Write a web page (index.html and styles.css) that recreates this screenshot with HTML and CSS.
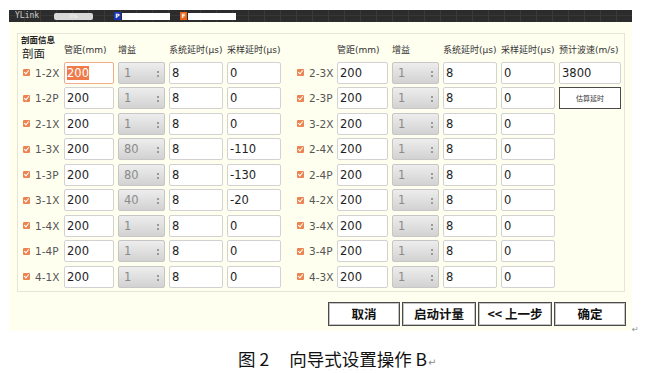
FILE: index.html
```html
<!DOCTYPE html>
<html>
<head>
  <meta charset="UTF-8"/>
  <title>剖面信息 - 向导式设置</title>
  <link rel="stylesheet" href="styles.css">
</head>
<body>
<div class="doc">
  <div class="line">
    <div class="shot">
      <div class="topbar">
        <span class="brand">YLink</span>
        <span class="prog">0%</span>
        <span class="tag tag-p">P</span><span class="slot"></span>
        <span class="tag tag-f">F</span><span class="slot"></span>
      </div>
      <div class="panel">
        <div class="group">
          <div class="gtitle">剖面信息</div>
          <div class="grid">
            <div class="hd hd-big">剖面</div>
            <div class="hd">管距(mm)</div>
            <div class="hd">增益</div>
            <div class="hd">系统延时(μs)</div>
            <div class="hd">采样延时(μs)</div>
            <div class="hd"></div>
            <div class="hd">管距(mm)</div>
            <div class="hd">增益</div>
            <div class="hd">系统延时(μs)</div>
            <div class="hd">采样延时(μs)</div>
            <div class="hd">预计波速(m/s)</div>

            <div class="lab"><i class="cb"></i>1-2X</div>
            <div class="inp focus"><span class="sel">200</span></div>
            <div class="combo">1</div>
            <div class="inp">8</div>
            <div class="inp">0</div>
            <div class="lab lab-r"><i class="cb"></i>2-3X</div>
            <div class="inp">200</div>
            <div class="combo">1</div>
            <div class="inp">8</div>
            <div class="inp">0</div>
            <div class="inp">3800</div>

            <div class="lab"><i class="cb"></i>1-2P</div>
            <div class="inp">200</div>
            <div class="combo">1</div>
            <div class="inp">8</div>
            <div class="inp">0</div>
            <div class="lab lab-r"><i class="cb"></i>2-3P</div>
            <div class="inp">200</div>
            <div class="combo">1</div>
            <div class="inp">8</div>
            <div class="inp">0</div>
            <div class="calc">估算延时</div>

            <div class="lab"><i class="cb"></i>2-1X</div>
            <div class="inp">200</div>
            <div class="combo">1</div>
            <div class="inp">8</div>
            <div class="inp">0</div>
            <div class="lab lab-r"><i class="cb"></i>3-2X</div>
            <div class="inp">200</div>
            <div class="combo">1</div>
            <div class="inp">8</div>
            <div class="inp">0</div>
            <div></div>

            <div class="lab"><i class="cb"></i>1-3X</div>
            <div class="inp">200</div>
            <div class="combo">80</div>
            <div class="inp">8</div>
            <div class="inp">-110</div>
            <div class="lab lab-r"><i class="cb"></i>2-4X</div>
            <div class="inp">200</div>
            <div class="combo">1</div>
            <div class="inp">8</div>
            <div class="inp">0</div>
            <div></div>

            <div class="lab"><i class="cb"></i>1-3P</div>
            <div class="inp">200</div>
            <div class="combo">80</div>
            <div class="inp">8</div>
            <div class="inp">-130</div>
            <div class="lab lab-r"><i class="cb"></i>2-4P</div>
            <div class="inp">200</div>
            <div class="combo">1</div>
            <div class="inp">8</div>
            <div class="inp">0</div>
            <div></div>

            <div class="lab"><i class="cb"></i>3-1X</div>
            <div class="inp">200</div>
            <div class="combo">40</div>
            <div class="inp">8</div>
            <div class="inp">-20</div>
            <div class="lab lab-r"><i class="cb"></i>4-2X</div>
            <div class="inp">200</div>
            <div class="combo">1</div>
            <div class="inp">8</div>
            <div class="inp">0</div>
            <div></div>

            <div class="lab"><i class="cb"></i>1-4X</div>
            <div class="inp">200</div>
            <div class="combo">1</div>
            <div class="inp">8</div>
            <div class="inp">0</div>
            <div class="lab lab-r"><i class="cb"></i>3-4X</div>
            <div class="inp">200</div>
            <div class="combo">1</div>
            <div class="inp">8</div>
            <div class="inp">0</div>
            <div></div>

            <div class="lab"><i class="cb"></i>1-4P</div>
            <div class="inp">200</div>
            <div class="combo">1</div>
            <div class="inp">8</div>
            <div class="inp">0</div>
            <div class="lab lab-r"><i class="cb"></i>3-4P</div>
            <div class="inp">200</div>
            <div class="combo">1</div>
            <div class="inp">8</div>
            <div class="inp">0</div>
            <div></div>

            <div class="lab"><i class="cb"></i>4-1X</div>
            <div class="inp">200</div>
            <div class="combo">1</div>
            <div class="inp">8</div>
            <div class="inp">0</div>
            <div class="lab lab-r"><i class="cb"></i>4-3X</div>
            <div class="inp">200</div>
            <div class="combo">1</div>
            <div class="inp">8</div>
            <div class="inp">0</div>
            <div></div>
          </div>
        </div>
        <div class="btns">
          <div class="btn btn-a">取消</div>
          <div class="btn btn-b">启动计量</div>
          <div class="btn btn-b">&lt;&lt; 上一步</div>
          <div class="btn btn-a">确定</div>
        </div>
      </div>
    </div>
    <span class="pmark">↵</span>
  </div>
  <div class="caption">图 2<span class="sp"></span>向导<span class="wavy">式设置</span>操作 B<span class="pmark pmark-c">↵</span></div>
</div>
</body>
</html>
```

FILE: styles.css
```css
html, body{
  margin: 0;
  background: #fff;
}
.doc{
  padding: 10px 0 0 9px;
  width: 647px;
  box-sizing: border-box;
}
.line{
  display: flex;
  align-items: flex-end;
}
.shot{
  width: 623px;
  font-family: "DejaVu Sans", "Noto Sans CJK SC", sans-serif;
}

/* top status bar */
.topbar{
  height: 12px;
  background-color: #2c2c2c;
  background-image:
    repeating-linear-gradient(90deg, transparent 0 15px, #3a3a3a 15px 16px),
    linear-gradient(180deg, transparent 0 5px, #363636 5px 6px, transparent 6px);
  display: flex;
  align-items: center;
  padding-left: 6px;
}
.brand{
  font-family: "DejaVu Sans Mono", monospace;
  font-size: 8px;
  color: #cfcfcf;
  width: 39px;
  line-height: 12px;
}
.prog{
  width: 39px;
  height: 7px;
  background: #d8d8d8;
  border-radius: 2px;
  font-size: 5px;
  line-height: 7px;
  color: #f4f4f4;
  text-align: center;
  margin-right: 21px;
}
.tag{
  width: 7px;
  height: 8px;
  color: #fff;
  font-size: 6px;
  font-weight: bold;
  line-height: 8px;
  text-align: center;
  margin-right: 1px;
}
.tag-p{background: #1a36b8;}
.tag-f{background: #f0641a;}
.slot{
  width: 48px;
  height: 7px;
  background: #fff;
  margin-right: 10px;
}

/* cream panel */
.panel{
  background: #fffff0;
  height: 309px;
  padding: 11px 0 0 8px;
  box-sizing: border-box;
}
.group{
  width: 608px;
  height: 259px;
  border: 1px solid #e6e6d6;
  box-sizing: border-box;
  padding: 1px 0 0 4px;
}
.gtitle{
  font-family: "Noto Sans CJK SC", sans-serif;
  font-size: 8.5px;
  font-weight: bold;
  line-height: 9px;
  height: 11px;
  color: #222;
  margin-left: -1px;
}
.grid{
  display: grid;
  grid-template-columns: 38px 50px 47px 54px 54px 48px 51px 47px 54px 54px 62px;
  grid-template-rows: 12px repeat(9, 22px);
  column-gap: 4px;
  row-gap: 3.5px;
}
.hd{
  font-family: "DejaVu Sans", "Noto Sans CJK SC", sans-serif;
  font-size: 9px;
  color: #333;
  line-height: 10px;
  white-space: nowrap;
  align-self: end;
  margin-bottom: 3px;
}
.hd-big{
  font-family: "Noto Sans CJK SC", sans-serif;
  font-size: 11.5px;
  line-height: 11.5px;
  margin-bottom: -1px;
  color: #222;
}
.lab{
  display: flex;
  align-items: center;
  font-size: 10.5px;
  color: #555;
  padding-left: 1px;
  white-space: nowrap;
}
.lab-r{padding-left: 12px;}
.cb{
  width: 7px;
  height: 7px;
  border-radius: 1px;
  background: #ec8452;
  margin-right: 5px;
  position: relative;
  flex: none;
}
.cb::after{
  content: "";
  position: absolute;
  left: 2px; top: 0px;
  width: 2px; height: 4px;
  border: solid #fff;
  border-width: 0 1px 1px 0;
  transform: rotate(40deg);
}
.inp{
  background: #fff;
  border: 1px solid #d2d2d2;
  border-radius: 2px;
  box-sizing: border-box;
  font-size: 11.5px;
  color: #1e1e1e;
  line-height: 20px;
  padding-left: 2px;
}
.focus{border-color: #f0aa8c;}
.sel{
  background: #f07a4a;
  color: #fff;
}
.combo{
  background: linear-gradient(#ededed, #d2d2d2);
  border: 1px solid #c6c6c6;
  border-radius: 2px;
  box-sizing: border-box;
  font-size: 11.5px;
  color: #8a8a8a;
  line-height: 20px;
  padding-left: 5px;
  position: relative;
}
.combo::after{
  content: "";
  position: absolute;
  right: 5px; top: 8px;
  width: 2px; height: 2px;
  background: #999;
  box-shadow: 0 4px 0 #999;
}
.calc{
  background: #fff;
  border: 1px solid #4a4a4a;
  box-sizing: border-box;
  font-family: "Noto Sans CJK SC", sans-serif;
  font-size: 7px;
  color: #333;
  text-align: center;
  line-height: 20px;
}

/* bottom buttons */
.btns{
  display: flex;
  justify-content: flex-end;
  gap: 2px;
  margin-top: 10px;
  padding-right: 6px;
}
.btn{
  height: 24px;
  border: 1px solid #4a4a4a;
  box-shadow: inset 0 0 0 1px #c4c4c4;
  background: #fff;
  box-sizing: border-box;
  font-family: "Noto Sans CJK SC", sans-serif;
  font-size: 12.5px;
  font-weight: bold;
  color: #111;
  text-align: center;
  line-height: 22px;
  white-space: nowrap;
}
.btn-a{width: 72px;}
.btn-b{width: 74px;}

.pmark{
  font-family: "DejaVu Sans", sans-serif;
  font-size: 8px;
  color: #888;
  line-height: 8px;
  margin-bottom: -3px;
}

/* caption */
.caption{
  margin-top: 17px;
  padding-left: 229px;
  font-family: "Noto Sans CJK SC", sans-serif;
  font-size: 17.5px;
  line-height: 22px;
  color: #111;
  white-space: nowrap;
}
.sp{
  display: inline-block;
  width: 20px;
}
.wavy{
  text-decoration: underline wavy #3a9a3a;
  text-decoration-thickness: 1px;
  text-underline-offset: 3px;
}
.pmark-c{
  font-size: 10px;
  margin-left: 1px;
}
```
